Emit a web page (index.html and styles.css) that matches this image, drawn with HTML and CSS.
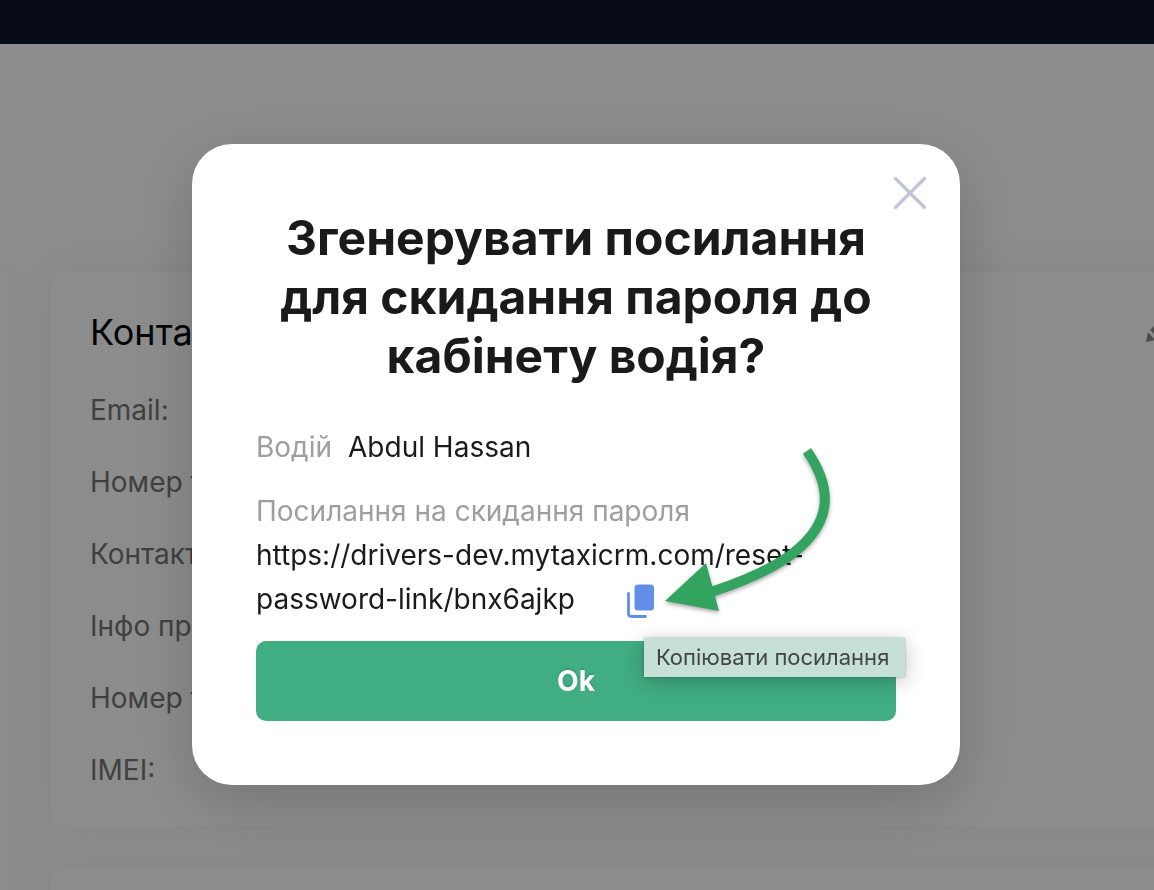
FILE: index.html
```
<!DOCTYPE html>
<html lang="uk">
<head>
    <meta charset="UTF-8">
    <meta name="viewport" content="width=device-width, initial-scale=1.0">
    <title>MyTaxiCRM</title>
    <link rel="stylesheet" href="styles.css">
</head>
<body>
    <header class="topbar"></header>

    <main class="page">
        <div class="side-card"></div>
        <div class="column">
            <section class="card">
                <div class="card-head">
                    <h2>Контакт</h2>
                    <button type="button" class="edit-btn" aria-label="Редагувати">
                        <svg viewBox="0 0 36 36" width="36" height="36">
                            <path fill="currentColor" d="M0 28 2 18 9 26zM4 16 19 1 27 9 12 24zM21 -1 24 -4 32 4 29 7z"/>
                        </svg>
                    </button>
                </div>
                <ul class="fields">
                    <li>Email:</li>
                    <li>Номер т.</li>
                    <li>Контакт:</li>
                    <li>Інфо про</li>
                    <li>Номер т.</li>
                    <li>IMEI:</li>
                </ul>
            </section>
            <section class="card"></section>
        </div>
    </main>

    <div class="overlay">
        <div class="modal" role="dialog" aria-modal="true" aria-labelledby="modalTitle">
            <button type="button" class="close-btn" aria-label="Закрити">
                <svg viewBox="0 0 36 36" width="36" height="36">
                    <path d="M3.500 3.500 32.500 32.500M32.500 3.500 3.500 32.500" fill="none" stroke="#c0c5d6" stroke-width="3.200" stroke-linecap="round"/>
                </svg>
            </button>

            <h1 id="modalTitle">Згенерувати посилання для скидання пароля до кабінету водія?</h1>

            <p class="row"><span class="label">Водій</span><span>Abdul Hassan</span></p>

            <div class="link-block">
                <p class="label">Посилання на скидання пароля</p>
                <p class="link">https://drivers-dev.mytaxicrm.com/reset-password-link/bnx6ajkp<span class="copy">
                    <button type="button" class="copy-btn" aria-label="Копіювати" aria-describedby="copyTip">
                        <svg viewBox="0 0 28 34" width="28" height="34">
                            <rect x="7.500" y="0.500" width="19.500" height="26" rx="3.500" fill="#638ee8"/>
                            <path d="M1.500 9.500V29.500Q1.500 32.500 4.500 32.500H18.500" fill="none" stroke="#638ee8" stroke-width="2.800" stroke-linecap="round"/>
                        </svg>
                    </button>
                    <span class="tooltip" role="tooltip" id="copyTip">Копіювати посилання</span>
                    <!-- hint arrow -->
                    <svg class="arrow" viewBox="0 0 180 172" width="180" height="172">
                        <path d="M146 12C171 48 173 83 131 115C111 130 84 142 50 153" fill="none" stroke="#33a45f" stroke-width="10"/>
                        <path d="M4 162 45 124 58 172z" fill="#33a45f"/>
                    </svg>
                </span></p>
            </div>

            <button type="button" class="ok-btn">Ok</button>
        </div>
    </div>
</body>
</html>
```

FILE: styles.css
```
* {
    box-sizing: border-box;
}

body {
    margin: 0;
    height: 100vh;
    overflow: hidden;
    display: flex;
    flex-direction: column;
    font-family: Inter, "Liberation Sans", sans-serif;
    font-size: 28px;
    line-height: 44px;
    color: #1a1a1a;
    background-color: #fff;
}

h1, h2, p, ul {
    margin: 0;
    padding: 0;
}

button {
    padding: 0;
    border: none;
    background: none;
    font: inherit;
    cursor: pointer;
}

svg {
    display: block;
    overflow: visible;
}

.topbar {
    height: 44px;
    flex-shrink: 0;
    background-color: #0f172a;
}

.page {
    flex: 1;
    min-height: 0;
    display: flex;
    gap: 40px;
    padding-top: 228px;
    overflow: hidden;
}

.side-card {
    width: 10px;
    flex-shrink: 0;
    border-radius: 0 10px 0 0;
    background-color: #fff;
    box-shadow: 0 0 40px rgba(0, 0, 0, 0.06);
}

/* the column runs past the right edge of the window */
.column {
    flex: 1;
    margin-right: -68px;
    display: flex;
    flex-direction: column;
    gap: 40px;
}

.card {
    flex-shrink: 0;
    min-height: 200px;
    padding: 38px 40px 34px;
    border-radius: 10px;
    background-color: #fff;
    box-shadow: 0 0 40px rgba(0, 0, 0, 0.06);
}

.card-head {
    display: flex;
    align-items: center;
    justify-content: space-between;
}

.card-head h2 {
    font-size: 36px;
    font-weight: 400;
    color: #000a0a;
}

.edit-btn {
    color: #8c8c8c;
}

.fields {
    display: flex;
    flex-direction: column;
    gap: 28px;
    padding-top: 34px;
    list-style: none;
    color: #757575;
}

.overlay {
    position: fixed;
    inset: 0;
    display: flex;
    align-items: flex-start;
    justify-content: center;
    padding: 144px 2px 0 0;
    background-color: rgba(0, 0, 0, 0.45);
}

.modal {
    position: relative;
    width: 100%;
    max-width: 768px;
    padding: 64px;
    display: flex;
    flex-direction: column;
    gap: 20px;
    border-radius: 40px;
    background-color: #fff;
    box-shadow: 0 16px 64px rgba(0, 0, 0, 0.18);
}

.close-btn {
    position: absolute;
    top: 31px;
    right: 32px;
}

.modal h1 {
    padding-bottom: 20px;
    font-size: 48px;
    line-height: 59px;
    font-weight: 700;
    text-align: center;
}

.row {
    display: flex;
    gap: 16px;
}

.label {
    color: #9e9e9e;
}

.link {
    color: #1a1a1a;
}

.copy {
    position: relative;
    display: inline-block;
    height: 34px;
    margin-left: 52px;
    vertical-align: middle;
}

.tooltip {
    position: absolute;
    top: 54px;
    left: 17px;
    z-index: 1;
    padding: 0 16px 0 12px;
    font-size: 22px;
    line-height: 39px;
    white-space: nowrap;
    color: #444;
    background-color: #c6dfd7;
    box-shadow: 0 4px 20px rgba(0, 0, 0, 0.25), 0 0 2px rgba(0, 0, 0, 0.3);
}

.arrow {
    position: absolute;
    left: 34px;
    bottom: 7px;
    pointer-events: none;
    filter: drop-shadow(0 2px 2px rgba(0, 0, 0, 0.35));
}

.ok-btn {
    height: 80px;
    border-radius: 10px;
    font-weight: 700;
    color: #fff;
    background-color: #41ad83;
    text-shadow: 0 -2px 2px rgba(0, 0, 0, 0.12);
}
```
